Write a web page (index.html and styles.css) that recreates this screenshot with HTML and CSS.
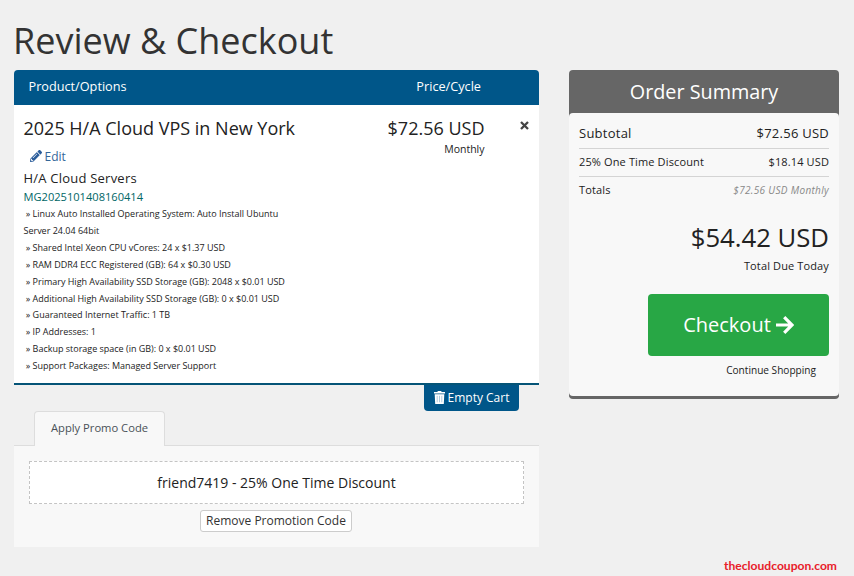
FILE: index.html
```html
<!DOCTYPE html>
<html lang="en">
<head>
    <meta charset="UTF-8">
    <meta name="viewport" content="width=device-width, initial-scale=1.0">
    <title>Review &amp; Checkout</title>
    <link rel="stylesheet" href="styles.css">
</head>
<body>

    <h1><span>Review &amp; Checkout</span></h1>

    <div class="cart">
        <div class="cart-body">
            <!-- Cart items -->
            <div class="cart-header">
                <span class="col-product">Product/Options</span>
                <span class="col-price">Price/Cycle</span>
            </div>
            <div class="cart-item">
                <div class="item-info">
                    <h2><span>2025 H/A Cloud VPS in New York</span></h2>
                    <a class="edit" href="#">
                        <svg width="12" height="12" viewBox="0 0 512 512" fill="currentColor"><path d="M498 142l-47 47c-5 5-12 5-17 0L323 78c-5-5-5-12 0-17l47-47c19-19 49-19 68 0l60 60c19 19 19 49 0 68zM283 101L22 362 0 484c-3 16 11 31 28 28l121-21 262-262c5-5 5-12 0-17L300 101c-5-5-13-5-17 0zM124 340c-6-6-6-14 0-20l154-154c5-5 14-5 20 0 5 6 5 15 0 20L144 340c-6 5-14 5-20 0zm-36 84h48v36l-65 12-31-32 11-64h37v48z"/></svg>
                        <span>Edit</span>
                    </a>
                    <p class="group"><span>H/A Cloud Servers</span></p>
                    <p class="domain"><span>MG2025101408160414</span></p>
                    <div class="options">
                        <p>&nbsp;» Linux Auto Installed Operating System: Auto Install Ubuntu Server 24.04 64bit</p>
                        <p>&nbsp;» Shared Intel Xeon CPU vCores: 24 x $1.37 USD</p>
                        <p>&nbsp;» RAM DDR4 ECC Registered (GB): 64 x $0.30 USD</p>
                        <p>&nbsp;» Primary High Availability SSD Storage (GB): 2048 x $0.01 USD</p>
                        <p>&nbsp;» Additional High Availability SSD Storage (GB): 0 x $0.01 USD</p>
                        <p>&nbsp;» Guaranteed Internet Traffic: 1 TB</p>
                        <p>&nbsp;» IP Addresses: 1</p>
                        <p>&nbsp;» Backup storage space (in GB): 0 x $0.01 USD</p>
                        <p>&nbsp;» Support Packages: Managed Server Support</p>
                    </div>
                </div>
                <div class="item-price">
                    <span class="amount">$72.56 USD</span>
                    <span class="cycle">Monthly</span>
                </div>
                <button class="remove" aria-label="Remove">
                    <svg width="9" height="9" viewBox="0 0 9 9"><path d="M1 1l7 7M8 1l-7 7" stroke="#444" stroke-width="2.3"/></svg>
                </button>
            </div>
            <div class="empty-row">
                <button class="empty-cart">
                    <svg width="11" height="13" viewBox="0 0 11 13"><path d="M0 1h3.3l.6-1h3.2l.6 1H11v1.5H0zM.7 3.2h9.6L9.8 13H1.2z" fill="#fff"/><path d="M3.2 4.8v6.5M5.5 4.8v6.5M7.8 4.8v6.5" stroke="#8fb6d0" stroke-width=".7"/></svg>
                    <span>Empty Cart</span>
                </button>
            </div>

            <!-- Promo code -->
            <div class="tabs">
                <a class="tab" href="#"><span>Apply Promo Code</span></a>
            </div>
            <div class="promo">
                <div class="promo-code"><span>friend7419 - 25% One Time Discount</span></div>
                <button class="remove-promo"><span>Remove Promotion Code</span></button>
            </div>
        </div>

        <!-- Order summary -->
        <div class="summary">
            <h2><span>Order Summary</span></h2>
            <div class="summary-body">
                <div class="row subtotal"><span>Subtotal</span><span>$72.56 USD</span></div>
                <div class="row discount"><span>25% One Time Discount</span><span>$18.14 USD</span></div>
                <div class="row totals"><span>Totals</span><span class="recurring">$72.56 USD Monthly</span></div>
                <div class="total"><span>$54.42 USD</span></div>
                <div class="due"><span>Total Due Today</span></div>
                <button class="checkout">
                    <span>Checkout</span>
                    <svg width="18" height="18" viewBox="0 0 18 18" fill="none" stroke="#fff" stroke-width="3.2"><path d="M0 9h16M8.2 1.2L16 9l-7.8 7.8"/></svg>
                </button>
                <a class="continue" href="#"><span>Continue Shopping</span></a>
            </div>
        </div>
    </div>

    <footer><span>thecloudcoupon.com</span></footer>

</body>
</html>
```

FILE: styles.css
```css
* {
    box-sizing: border-box;
}
body {
    margin: 0;
    height: 576px;
    padding: 13px 15px 0 14px;
    overflow: hidden;
    display: flex;
    flex-direction: column;
    font-family: "Open Sans", sans-serif;
    font-size: 13px;
    color: #222;
    background-color: #f0f0f0;
}
h1, h2, p {
    margin: 0;
    font-weight: 400;
}
a {
    color: inherit;
    text-decoration: none;
}
button {
    font-family: inherit;
    border: none;
    padding: 0;
    cursor: pointer;
}
svg {
    display: block;
    flex: none;
}
h1 {
    height: 57px;
    font-size: 36px;
    line-height: 56px;
    color: #333;
    text-indent: -1px;
}
.cart {
    display: flex;
    align-items: flex-start;
    gap: 30px;
}
.cart-body {
    width: 525px;
}
.cart-header {
    display: flex;
    justify-content: space-between;
    height: 35px;
    padding: 0 58px 0 14.5px;
    font-size: 12.7px;
    line-height: 33px;
    color: #fff;
    background-color: #005689;
    border-radius: 4px 4px 0 0;
}
.cart-item {
    display: flex;
    height: 280px;
    padding: 9px 10px 0 9.5px;
    background-color: #fff;
    border-bottom: 2px solid #055477;
}
.item-info {
    width: 275px;
}
.item-info h2 {
    font-size: 18px;
    line-height: 28px;
    white-space: nowrap;
}
.edit {
    display: flex;
    align-items: center;
    gap: 3px;
    height: 27px;
    padding: 1px 0 0 6px;
    font-size: 12px;
    color: #336699;
}
.edit svg {
    color: #2b5d9b;
}
.group {
    font-size: 13px;
    line-height: 19px;
    letter-spacing: 0.22px;
}
.domain {
    font-size: 11.1px;
    line-height: 18px;
    color: #006666;
}
.options {
    font-size: 9px;
    line-height: 16.9px;
    letter-spacing: -0.01px;
}
.item-price {
    width: 186px;
    display: flex;
    flex-direction: column;
    align-items: flex-end;
}
.amount {
    font-size: 18px;
    line-height: 28px;
}
.cycle {
    font-size: 10.5px;
    line-height: 14px;
}
.remove {
    align-self: flex-start;
    margin: 7px 0 0 35.5px;
    background: none;
}
.empty-row {
    display: flex;
    justify-content: flex-end;
    height: 26px;
    padding-right: 20px;
}
.empty-cart {
    display: flex;
    align-items: center;
    justify-content: center;
    gap: 3px;
    width: 95px;
    height: 26px;
    padding-bottom: 2px;
    font-size: 12px;
    color: #fff;
    background-color: #005689;
    border-radius: 0 0 4px 4px;
}
.tabs {
    height: 35px;
    padding-left: 20px;
    border-bottom: 1px solid #ddd;
}
.tab {
    display: block;
    width: 131px;
    height: 35px;
    font-size: 11.2px;
    line-height: 32px;
    text-align: center;
    color: #495057;
    background-color: #f8f8f8;
    border: 1px solid #ddd;
    border-bottom: none;
    border-radius: 4px 4px 0 0;
}
.promo {
    display: flex;
    flex-direction: column;
    align-items: center;
    gap: 6px;
    height: 101px;
    padding: 15px 15px 0;
    background-color: #f8f8f8;
}
.promo-code {
    width: 100%;
    height: 43px;
    font-size: 14px;
    line-height: 41px;
    text-align: center;
    background-color: #fff;
    border: 1px dashed #c4c4c4;
}
.remove-promo {
    width: 152px;
    height: 22px;
    margin-right: 1px;
    font-size: 12px;
    line-height: 20px;
    color: #333;
    background-color: #fff;
    border: 1px solid #ccc;
    border-radius: 3px;
}
.summary {
    width: 270px;
    height: 329px;
    background-color: #666;
    border-bottom: 3px solid #666;
    border-radius: 4px;
}
.summary h2 {
    height: 43px;
    font-size: 19.8px;
    line-height: 43px;
    text-align: center;
    color: #fff;
}
.summary-body {
    display: flex;
    flex-direction: column;
    align-items: flex-end;
    height: 283px;
    padding: 7px 10px 0;
    background-color: #f8f8f8;
    border-radius: 4px;
}
.row {
    display: flex;
    justify-content: space-between;
    width: 100%;
    height: 28px;
    font-size: 11px;
    line-height: 26px;
    letter-spacing: 0.13px;
}
.subtotal {
    height: 29px;
    font-size: 13px;
    letter-spacing: 0.25px;
}
.subtotal, .discount {
    border-bottom: 1px solid #d4d4d4;
}
.recurring {
    font-size: 10px;
    font-style: italic;
    letter-spacing: 0.33px;
    color: #888;
}
.total {
    margin-top: 15px;
    font-size: 25.7px;
    line-height: 36px;
}
.due {
    font-size: 11px;
    line-height: 20px;
    letter-spacing: 0.13px;
}
.checkout {
    display: flex;
    align-items: center;
    justify-content: center;
    gap: 5px;
    width: 181px;
    height: 62px;
    margin-top: 18px;
    padding-bottom: 1px;
    font-size: 20px;
    color: #fff;
    background-color: #28a745;
    border-radius: 4px;
}
.continue {
    margin-right: 13px;
    font-size: 10.1px;
    line-height: 29px;
}
footer {
    margin-top: auto;
    padding-right: 2px;
    font-family: Lato, sans-serif;
    font-size: 12.1px;
    font-weight: 700;
    line-height: 20px;
    text-align: right;
    color: #e8202a;
}
```
